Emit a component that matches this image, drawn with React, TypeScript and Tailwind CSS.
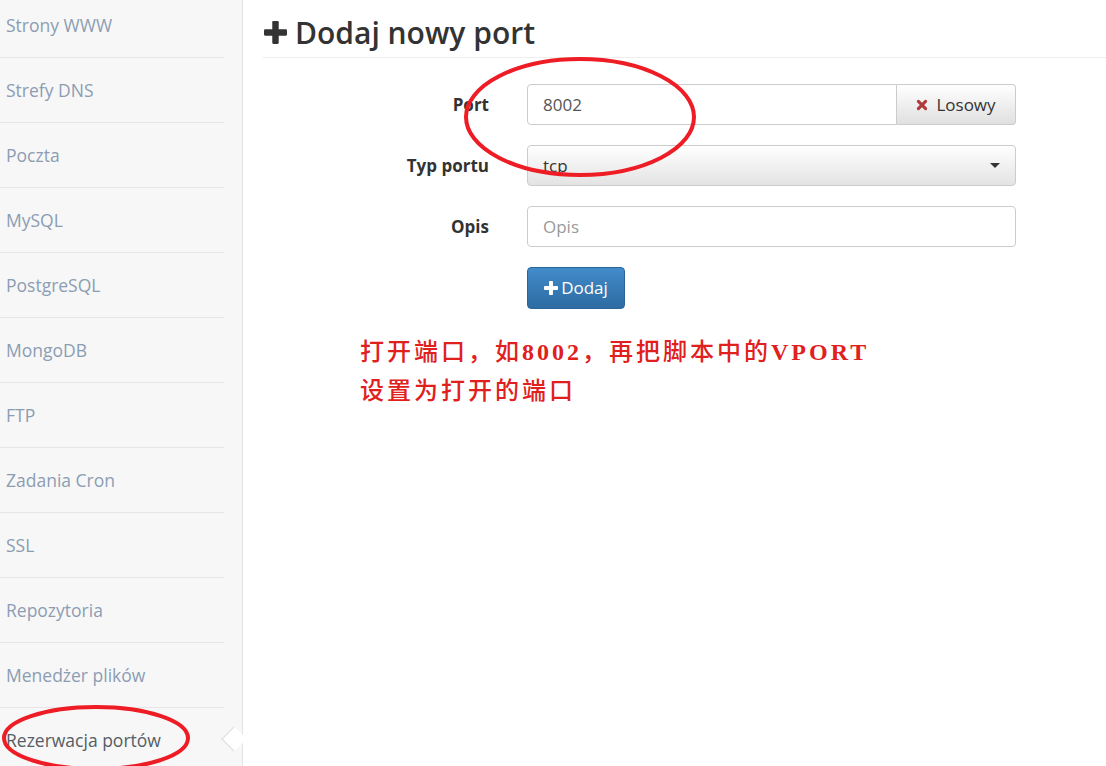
import { useState } from 'react';

const menu = [
  'Strony WWW',
  'Strefy DNS',
  'Poczta',
  'MySQL',
  'PostgreSQL',
  'MongoDB',
  'FTP',
  'Zadania Cron',
  'SSL',
  'Repozytoria',
  'Menedżer plików',
  'Rezerwacja portów',
];

function PlusIcon({ className }: { className?: string }) {
  return (
    <svg viewBox="0 0 10 10" className={className} fill="currentColor">
      <rect x="3.6" y="0" width="2.8" height="10" rx="0.5" />
      <rect x="0" y="3.6" width="10" height="2.8" rx="0.5" />
    </svg>
  );
}

export default function App() {
  const [port, setPort] = useState('8002');
  const [opis, setOpis] = useState('');

  return (
    <div
      className="relative flex w-[1106px] h-[766px] overflow-hidden bg-white"
      style={{ fontFamily: '"Open Sans", "Noto Sans", sans-serif' }}
    >
      {/* sidebar */}
      <div className="w-[243px] shrink-0 bg-[#f7f7f7] border-r border-[#e3e3e3]">
        <div className="-mt-[7px] pr-[18px]">
          {menu.map((item, i) => {
            const active = i === menu.length - 1;
            return (
              <div
                key={item}
                className={`relative h-[65px] flex items-center pl-[6px] text-[17.5px] ${
                  active ? 'text-[#555d66]' : 'text-[#8c9db3] border-b border-[#e6e6e6]'
                }`}
              >
                {item}
                {active && (
                  <span className="absolute right-[-19px] top-[22px] w-[18px] h-[18px] rotate-45 bg-white border-l border-b border-[#dcdcdc]" />
                )}
              </div>
            );
          })}
        </div>
      </div>

      {/* content */}
      <div className="flex-1 pl-[20px] pt-[14px]">
        <h1 className="flex items-center gap-[8px] pb-[6px] border-b border-[#eeeeee] text-[#333] text-[30px] font-semibold leading-[37px]">
          <PlusIcon className="w-[23px] h-[23px] ml-[1px]" />
          Dodaj nowy port
        </h1>

        <div className="mt-[26px] flex flex-col gap-[20px] text-[17px]">
          <div className="flex items-center">
            <label className="w-[226px] text-right font-bold text-[#333]">Port</label>
            <div className="ml-[38px] flex w-[489px] h-[41px]">
              <input
                value={port}
                onChange={(e) => setPort(e.target.value)}
                className="flex-1 min-w-0 border border-[#ccc] rounded-l-[4px] px-[15px] text-[#555] outline-none"
              />
              <button className="w-[119px] flex items-center justify-center gap-[8px] border border-l-0 border-[#ccc] rounded-r-[4px] bg-gradient-to-b from-white to-[#e0e0e0] text-[#333]">
                <svg viewBox="0 0 10 10" className="w-[12px] h-[12px]" stroke="#b03a3a" strokeWidth="2.6" strokeLinecap="round">
                  <path d="M2 2 L8 8 M8 2 L2 8" />
                </svg>
                Losowy
              </button>
            </div>
          </div>

          <div className="flex items-center">
            <label className="w-[226px] text-right font-bold text-[#333]">Typ portu</label>
            <div className="ml-[38px] relative w-[489px] h-[41px] border border-[#ccc] rounded-[4px] bg-gradient-to-b from-white to-[#e3e3e3] flex items-center px-[15px] text-[#333]">
              tcp
              <span className="absolute right-[15px] top-[17px] w-0 h-0 border-l-[5px] border-r-[5px] border-t-[5px] border-l-transparent border-r-transparent border-t-[#333]" />
            </div>
          </div>

          <div className="flex items-center">
            <label className="w-[226px] text-right font-bold text-[#333]">Opis</label>
            <input
              value={opis}
              onChange={(e) => setOpis(e.target.value)}
              placeholder="Opis"
              className="ml-[38px] w-[489px] h-[41px] border border-[#ccc] rounded-[4px] px-[15px] text-[#555] placeholder:text-[#999] outline-none"
            />
          </div>

          <div className="flex">
            <button className="ml-[264px] w-[98px] h-[42px] flex items-center justify-center gap-[3px] rounded-[4px] border border-[#2b669a] bg-gradient-to-b from-[#428bca] to-[#2d6ca2] text-white text-[17px]">
              <PlusIcon className="w-[14px] h-[14px]" />
              Dodaj
            </button>
          </div>
        </div>

        <div
          className="mt-[24px] ml-[97px] text-[#e0201c] text-[24px] leading-[39px] font-medium tracking-[3px]"
          style={{ fontFamily: '"Liberation Serif", "Noto Sans CJK SC", serif' }}
        >
          <div>
            打开端口，如<span className="font-bold">8002</span>，再把脚本中的
            <span className="font-bold">VPORT</span>
          </div>
          <div>设置为打开的端口</div>
        </div>
      </div>

      {/* annotation ellipses */}
      <svg className="absolute inset-0 pointer-events-none" width="1106" height="766">
        <ellipse cx="580" cy="117" rx="114" ry="58" fill="none" stroke="#ee1c24" strokeWidth="4" />
        <ellipse cx="96" cy="738" rx="92" ry="31" fill="none" stroke="#ee1c24" strokeWidth="4" />
      </svg>
    </div>
  );
}
